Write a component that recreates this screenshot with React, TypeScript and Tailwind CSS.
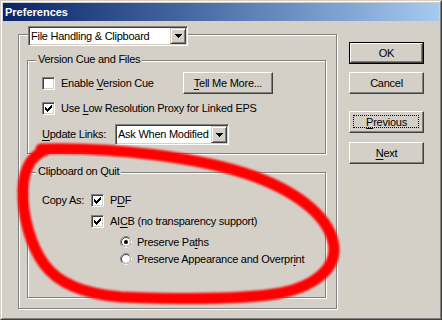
import React from "react";

const U = ({ children }: { children: React.ReactNode }) => (
  <span className="underline underline-offset-[2px] decoration-[1px]">{children}</span>
);

const Check = ({ checked }: { checked?: boolean }) => (
  <span className="w-[13px] h-[13px] shrink-0 bg-white border border-t-[#808080] border-l-[#808080] border-r-white border-b-white shadow-[inset_1px_1px_0_#404040,inset_-1px_-1px_0_#d4d0c8] flex items-center justify-center">
    {checked && (
      <svg width="7" height="7" viewBox="0 0 7 7" shapeRendering="crispEdges">
        <rect x="0" y="2" width="1" height="3" fill="#000" />
        <rect x="1" y="3" width="1" height="3" fill="#000" />
        <rect x="2" y="4" width="1" height="3" fill="#000" />
        <rect x="3" y="3" width="1" height="3" fill="#000" />
        <rect x="4" y="2" width="1" height="3" fill="#000" />
        <rect x="5" y="1" width="1" height="3" fill="#000" />
        <rect x="6" y="0" width="1" height="3" fill="#000" />
      </svg>
    )}
  </span>
);

const Radio = ({ checked }: { checked?: boolean }) => (
  <svg width="12" height="12" viewBox="0 0 12 12" className="shrink-0">
    <circle cx="6" cy="6" r="5.5" fill="#fff" stroke="#808080" strokeWidth="1" />
    <path d="M 2.1 9.9 A 5.5 5.5 0 0 0 9.9 2.1" fill="none" stroke="#fff" strokeWidth="1" />
    <circle cx="6" cy="6" r="4.5" fill="none" stroke="#404040" strokeWidth="1" />
    <path d="M 2.8 9.2 A 4.5 4.5 0 0 0 9.2 2.8" fill="none" stroke="#d4d0c8" strokeWidth="1" />
    {checked && <circle cx="6" cy="6" r="2" fill="#000" />}
  </svg>
);

const Arrow = () => (
  <span className="w-[16px] h-full shrink-0 bg-[#d4d0c8] border border-t-[#d4d0c8] border-l-[#d4d0c8] border-r-[#404040] border-b-[#404040] shadow-[inset_1px_1px_0_#fff,inset_-1px_-1px_0_#808080] flex items-center justify-center">
    <svg width="7" height="4" viewBox="0 0 7 4" shapeRendering="crispEdges">
      <rect x="0" y="0" width="7" height="1" fill="#000" />
      <rect x="1" y="1" width="5" height="1" fill="#000" />
      <rect x="2" y="2" width="3" height="1" fill="#000" />
      <rect x="3" y="3" width="1" height="1" fill="#000" />
    </svg>
  </span>
);

const Combo = ({ text, className }: { text: string; className: string }) => (
  <div
    className={
      "flex bg-white border border-t-[#808080] border-l-[#808080] border-r-white border-b-white shadow-[inset_1px_1px_0_#404040,inset_-1px_-1px_0_#d4d0c8] p-[1px] " +
      className
    }
  >
    <span className="flex-1 flex items-center pl-[1px] whitespace-nowrap overflow-hidden">{text}</span>
    <Arrow />
  </div>
);

const Button = ({
  children,
  className = "",
  focus,
}: {
  children: React.ReactNode;
  className?: string;
  focus?: boolean;
}) => (
  <div
    className={
      "relative flex items-center justify-center bg-[#d4d0c8] border border-t-white border-l-white border-r-[#404040] border-b-[#404040] shadow-[inset_-1px_-1px_0_#808080] " +
      className
    }
  >
    {focus && (
      <span className="absolute left-[3px] top-[3px] right-[4px] bottom-[4px] border border-dotted border-black" />
    )}
    <span className="relative">{children}</span>
  </div>
);

export default function App() {
  return (
    <div className="w-[442px] h-[320px] bg-[#d4d0c8] border border-t-[#d4d0c8] border-l-[#d4d0c8] border-r-[#404040] border-b-[#404040] font-['Liberation_Sans',Arial,sans-serif] text-[11px] text-black tracking-[-0.25px] relative overflow-hidden">
      <div className="w-full h-full border border-t-white border-l-white border-r-[#808080] border-b-[#808080] p-[1px] flex flex-col">
        {/* Title bar */}
        <div className="h-[18px] shrink-0 bg-gradient-to-r from-[#0a246a] to-[#a6caf0] flex items-center pl-[2px]">
          <span className="text-white font-bold text-[11px] tracking-normal leading-none">Preferences</span>
        </div>

        {/* Body */}
        <div className="flex pl-[15px] pt-[13px]">
          {/* Outer group */}
          <div className="relative w-[319px] h-[275px] shrink-0 border border-[#808080] shadow-[1px_1px_0_#fff,inset_1px_1px_0_#fff] pl-[8px] pt-[25px]">
            <Combo text="File Handling & Clipboard" className="absolute left-[9px] top-[-9px] w-[160px] h-[20px]" />

            {/* Version Cue and Files */}
            <div className="relative w-[299px] h-[94px] border border-[#808080] shadow-[1px_1px_0_#fff,inset_1px_1px_0_#fff] pl-[14px]">
              <span className="absolute left-[8px] top-[-8px] px-[2px] bg-[#d4d0c8] leading-[13px]">Version Cue and Files</span>
              <div className="mt-[11px] h-[22px] flex items-center">
                <Check />
                <span className="ml-[6px] w-[122px]">
                  Enable <U>V</U>ersion Cue
                </span>
                <Button className="w-[90px] h-[22px]">
                  <U>T</U>ell Me More...
                </Button>
              </div>
              <div className="mt-[6px] h-[16px] flex items-center">
                <Check checked />
                <span className="ml-[6px] whitespace-nowrap">
                  Use <U>L</U>ow Resolution Proxy for Linked EPS
                </span>
              </div>
              <div className="mt-[8px] h-[21px] flex items-center">
                <span className="w-[73px]">
                  <U>U</U>pdate Links:
                </span>
                <Combo text="Ask When Modified" className="w-[114px] h-[21px]" />
              </div>
            </div>

            {/* Clipboard on Quit */}
            <div className="relative mt-[18px] w-[299px] h-[126px] border border-[#808080] shadow-[1px_1px_0_#fff,inset_1px_1px_0_#fff] pl-[14px]">
              <span className="absolute left-[8px] top-[-8px] px-[2px] bg-[#d4d0c8] leading-[13px]">Clipboard on Quit</span>
              <div className="mt-[19px] h-[16px] flex items-center">
                <span className="w-[49px]">Copy As:</span>
                <Check checked />
                <span className="ml-[6px]">
                  P<U>D</U>F
                </span>
              </div>
              <div className="mt-[5px] h-[16px] flex items-center pl-[49px]">
                <Check checked />
                <span className="ml-[6px] whitespace-nowrap">
                  AI<U>C</U>B (no transparency support)
                </span>
              </div>
              <div className="mt-[5px] h-[16px] flex items-center pl-[78px]">
                <Radio checked />
                <span className="ml-[5px] whitespace-nowrap">
                  Preserve Pa<U>t</U>hs
                </span>
              </div>
              <div className="mt-[1px] h-[16px] flex items-center pl-[78px]">
                <Radio />
                <span className="ml-[5px] whitespace-nowrap">
                  Preserve Appearance and Overpr<U>i</U>nt
                </span>
              </div>
            </div>
          </div>

          {/* Right buttons */}
          <div className="ml-[12px] pt-[8px] flex flex-col">
            <div className="w-[75px] h-[22px] border border-black">
              <Button className="w-full h-full">OK</Button>
            </div>
            <Button className="mt-[8px] w-[75px] h-[22px]">Cancel</Button>
            <Button className="mt-[17px] w-[75px] h-[22px]" focus>
              <U>P</U>revious
            </Button>
            <Button className="mt-[9px] w-[75px] h-[22px]">
              <U>N</U>ext
            </Button>
          </div>
        </div>
      </div>

      {/* Red hand-drawn annotation */}
      <svg className="absolute left-0 top-0 pointer-events-none" width="442" height="320" viewBox="0 0 442 320">
        <defs>
          <filter id="soft" x="-10%" y="-10%" width="120%" height="120%">
            <feGaussianBlur stdDeviation="0.9" />
          </filter>
        </defs>
        <path
          d="M 40 148 C 110 146, 200 156, 255 176 C 300 193, 330 218, 333 246 C 335 268, 312 286, 280 292 C 240 299, 170 298, 120 296 C 82 293, 56 281, 43 263 C 30 245, 21 215, 22 188 C 23 166, 32 152, 48 148"
          fill="none"
          stroke="#ff0000"
          strokeWidth="11"
          strokeLinecap="round"
          strokeLinejoin="round"
          filter="url(#soft)"
        />
      </svg>
    </div>
  );
}
